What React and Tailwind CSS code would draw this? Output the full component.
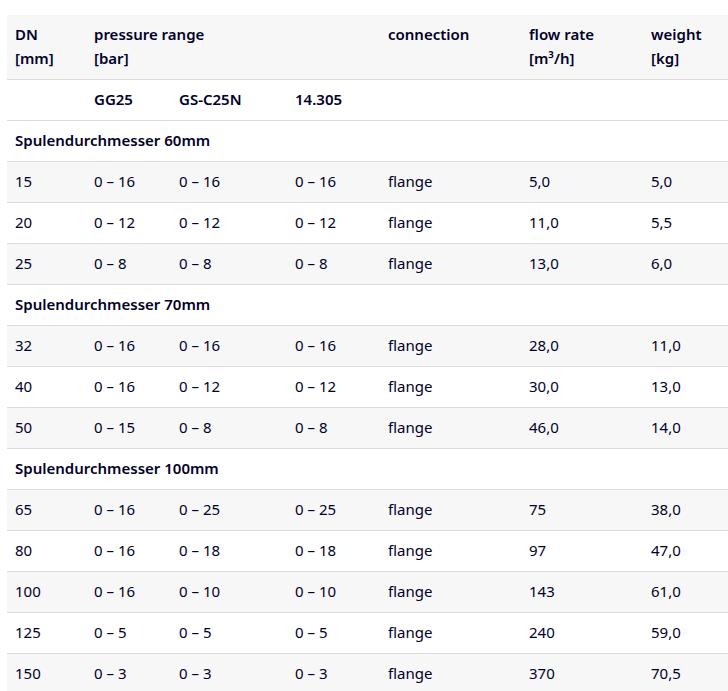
import React from "react";

const groups = [
  {
    title: "Spulendurchmesser 60mm",
    rows: [
      ["15", "0 – 16", "0 – 16", "0 – 16", "flange", "5,0", "5,0"],
      ["20", "0 – 12", "0 – 12", "0 – 12", "flange", "11,0", "5,5"],
      ["25", "0 – 8", "0 – 8", "0 – 8", "flange", "13,0", "6,0"],
    ],
  },
  {
    title: "Spulendurchmesser 70mm",
    rows: [
      ["32", "0 – 16", "0 – 16", "0 – 16", "flange", "28,0", "11,0"],
      ["40", "0 – 16", "0 – 12", "0 – 12", "flange", "30,0", "13,0"],
      ["50", "0 – 15", "0 – 8", "0 – 8", "flange", "46,0", "14,0"],
    ],
  },
  {
    title: "Spulendurchmesser 100mm",
    rows: [
      ["65", "0 – 16", "0 – 25", "0 – 25", "flange", "75", "38,0"],
      ["80", "0 – 16", "0 – 18", "0 – 18", "flange", "97", "47,0"],
      ["100", "0 – 16", "0 – 10", "0 – 10", "flange", "143", "61,0"],
      ["125", "0 – 5", "0 – 5", "0 – 5", "flange", "240", "59,0"],
      ["150", "0 – 3", "0 – 3", "0 – 3", "flange", "370", "70,5"],
    ],
  },
];

const td = "px-2 pt-[7px] pb-[9px] leading-6 align-top text-left border-b border-[#dcdcdc]";

export default function App() {
  const body = [];
  let i = 0;
  body.push(
    <tr key="sub" className="bg-white">
      <td className={td}></td>
      <td className={td + " font-semibold"}>GG25</td>
      <td className={td + " font-semibold"}>GS-C25N</td>
      <td className={td + " font-semibold"}>14.305</td>
      <td className={td}></td>
      <td className={td}></td>
      <td className={td}></td>
    </tr>
  );
  i = 1;
  groups.forEach((g, gi) => {
    i++;
    body.push(
      <tr key={"g" + gi} className={i % 2 === 1 ? "bg-[#f7f7f7]" : "bg-white"}>
        <td colSpan={7} className={td + " font-semibold"}>{g.title}</td>
      </tr>
    );
    g.rows.forEach((r, ri) => {
      i++;
      body.push(
        <tr key={"r" + gi + "-" + ri} className={i % 2 === 1 ? "bg-[#f7f7f7]" : "bg-white"}>
          {r.map((c, ci) => (
            <td key={ci} className={td}>{c}</td>
          ))}
        </tr>
      );
    });
  });

  return (
    <div className="w-[728px] h-[691px] overflow-hidden bg-white pt-[15px] pl-[7px] text-[15px] text-[#000028]" style={{ fontFamily: '"Noto Sans", "Open Sans", sans-serif' }}>
      <table className="w-[780px] border-collapse table-fixed">
        <colgroup>
          <col className="w-[79px]" />
          <col className="w-[85px]" />
          <col className="w-[116px]" />
          <col className="w-[93px]" />
          <col className="w-[141px]" />
          <col className="w-[122px]" />
          <col />
        </colgroup>
        <thead>
          <tr className="bg-[#f7f7f7]">
            <th className={td + " font-semibold"}>DN<br />[mm]</th>
            <th colSpan={3} className={td + " font-semibold"}>pressure range<br />[bar]</th>
            <th className={td + " font-semibold"}>connection</th>
            <th className={td + " font-semibold"}>flow rate<br />[m³/h]</th>
            <th className={td + " font-semibold"}>weight<br />[kg]</th>
          </tr>
        </thead>
        <tbody>{body}</tbody>
      </table>
    </div>
  );
}
